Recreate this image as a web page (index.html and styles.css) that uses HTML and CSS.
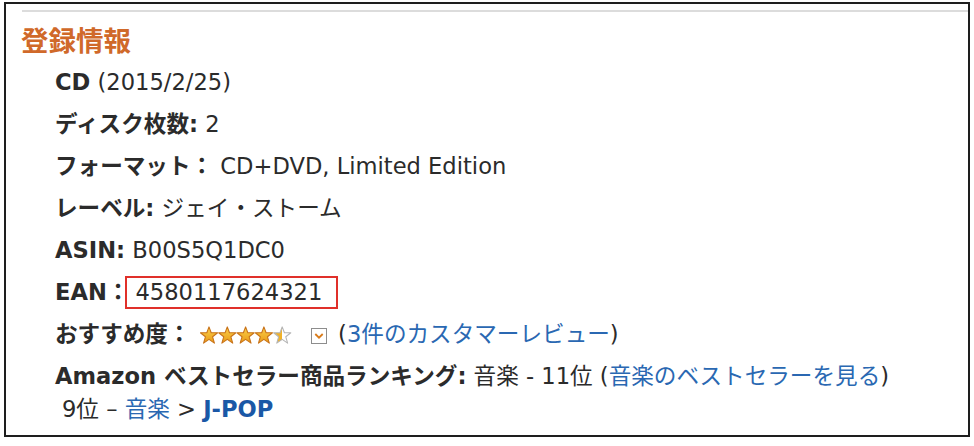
FILE: index.html
```html
<!DOCTYPE html>
<html lang="ja">
<head>
<meta charset="utf-8">
<link rel="stylesheet" href="styles.css">
</head>
<body>
<div class="frame">
  <div class="rule"></div>
  <h2 class="title">登録情報</h2>
  <ul class="details">
    <li><b>CD</b> (2015/2/25)</li>
    <li><b>ディスク枚数:</b> 2</li>
    <li><b>フォーマット：</b> CD+DVD, Limited Edition</li>
    <li><b>レーベル:</b> ジェイ・ストーム</li>
    <li><b>ASIN:</b> B00S5Q1DC0</li>
    <li><b>EAN：</b><span class="mark">4580117624321</span></li>
    <li class="rating"><b>おすすめ度：</b>
      <svg class="stars" width="92" height="18" viewBox="0 0 92 18">
        <defs>
          <linearGradient id="gold" x1="0" x2="0" y1="0" y2="1">
            <stop offset="0" stop-color="#fbd14b"/>
            <stop offset="1" stop-color="#e99a16"/>
          </linearGradient>
          <linearGradient id="half" x1="0" x2="1" y1="0" y2="0">
            <stop offset="0.5" stop-color="#f0b22a"/>
            <stop offset="0.5" stop-color="#ffffff"/>
          </linearGradient>
          <polygon id="st" points="9,0.4 11.2,6.2 17.6,6.3 12.6,10.3 14.4,16.6 9,12.9 3.6,16.6 5.4,10.3 0.4,6.3 6.8,6.2"/>
        </defs>
        <g stroke="#c8731a" stroke-width="1.1" stroke-linejoin="round" fill="url(#gold)">
          <use href="#st" x="0" y="0.5"/>
          <use href="#st" x="18.3" y="0.5"/>
          <use href="#st" x="36.6" y="0.5"/>
          <use href="#st" x="54.9" y="0.5"/>
        </g>
        <use href="#st" x="73.2" y="0.5" fill="url(#half)" stroke="#b5b5b5" stroke-width="1.1" stroke-linejoin="round"/>
      </svg>
      <svg class="drop" width="16" height="16" viewBox="0 0 16 16">
        <rect x="0.5" y="0.5" width="15" height="15" fill="#fff" stroke="#8d8d8d"/>
        <path d="M4.3 6 L8 9.7 L11.7 6" fill="none" stroke="#d97b1a" stroke-width="1.8"/>
      </svg>
      (<a href="#">3件のカスタマーレビュー</a>)</li>
    <li class="rank"><b>Amazon ベストセラー商品ランキング:</b> 音楽 - 11位 (<a href="#">音楽のベストセラーを見る</a>)<br>
      <span class="sub">9位 – <a href="#">音楽</a> &gt; <a href="#" class="strong">J-POP</a></span></li>
  </ul>
</div>
</body>
</html>
```

FILE: styles.css
```css
html, body {
  margin: 0;
  padding: 0;
  background: #fff;
}
body {
  font-family: "DejaVu Sans", Verdana, "Noto Sans CJK JP", sans-serif;
  color: #2b2b2b;
}
.frame {
  margin: 2px 0 0 4px;
  width: 962px;
  height: 431px;
  border: 2px solid #1e1e1e;
  overflow: hidden;
}
.rule {
  height: 2px;
  background: #dcdcdc;
  margin: 6px 0 0 16px;
}
.title {
  margin: 10px 0 0 15px;
  font-family: "Noto Sans CJK JP", sans-serif;
  font-size: 27.5px;
  line-height: 34px;
  font-weight: 700;
  color: #d0692a;
}
.details {
  list-style: none;
  margin: 10px 0 0 0;
  padding: 0 0 0 49px;
  font-size: 22.6px;
}
.details li {
  line-height: 33px;
  margin-bottom: 9px;
}
.details b {
  font-weight: 700;
}
.mark {
  display: inline-block;
  border: 2px solid #e0302a;
  padding: 0 14px 0 8px;
  line-height: 29px;
  margin-left: -4px;
}
.rating svg {
  vertical-align: -2px;
}
.stars {
  margin-left: 2px;
}
.drop {
  margin-left: 12px;
  margin-right: 4px;
}
a {
  color: #2a68b2;
  text-decoration: none;
}
a.strong {
  font-weight: 700;
  color: #1a58a6;
}
.sub {
  padding-left: 7px;
}
```
